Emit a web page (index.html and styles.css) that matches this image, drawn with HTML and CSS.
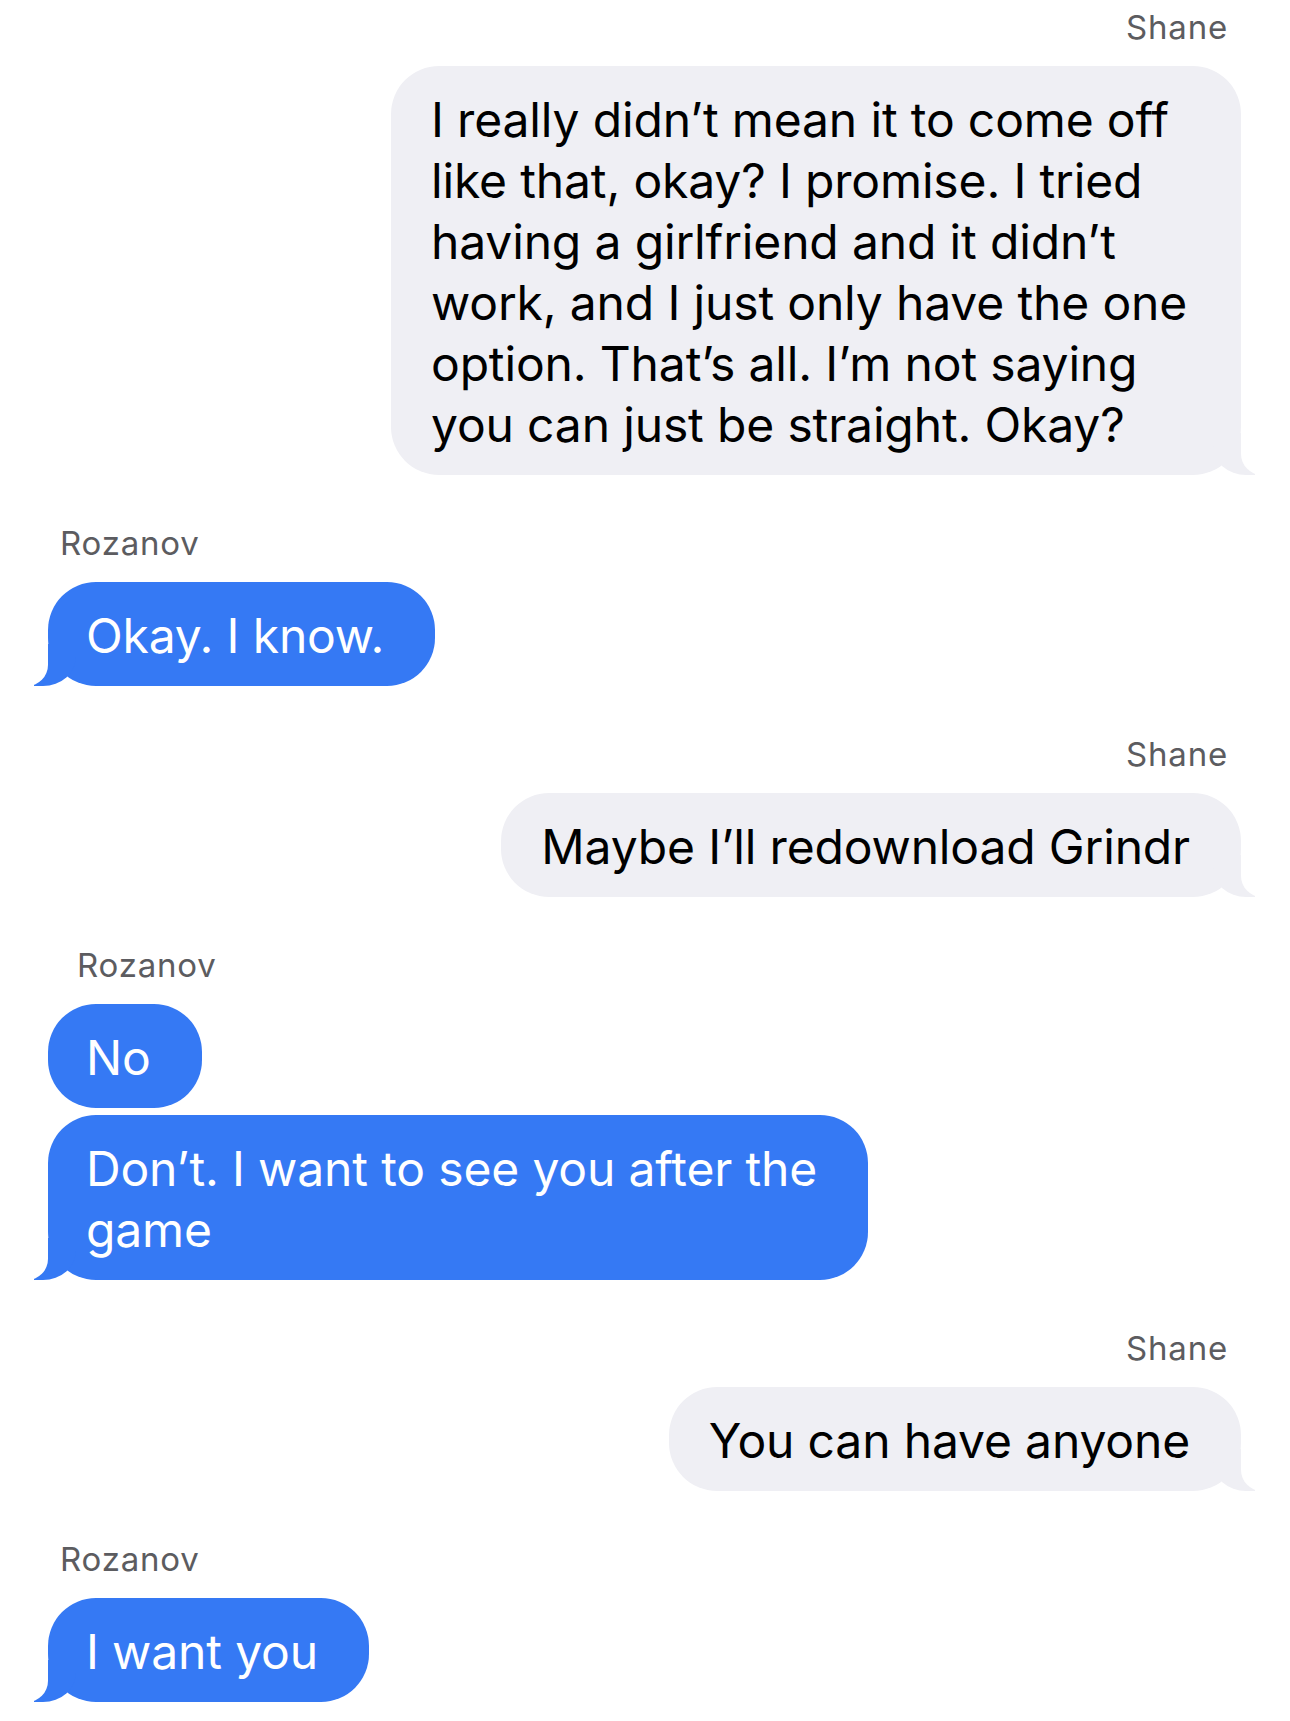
FILE: index.html
```html
<!DOCTYPE html>
<html>
<head>
  <title>Messages</title>
  <meta charset="UTF-8">
  <meta name="viewport" content="width=device-width, initial-scale=1.0">
  <link rel="stylesheet" href="styles.css">
</head>
<body>
  <div class="thread">

    <div class="group sent">
      <div class="sender">Shane</div>
      <div class="bubble tail">I really didn’t mean it to come off like that, okay? I promise. I tried having a girlfriend and it didn’t work, and I just only have the one option. That’s all. I’m not saying you can just be straight. Okay?</div>
    </div>

    <div class="group received">
      <div class="sender">Rozanov</div>
      <div class="bubble tail">Okay. I know.</div>
    </div>

    <div class="group sent">
      <div class="sender">Shane</div>
      <div class="bubble tail">Maybe I’ll redownload Grindr</div>
    </div>

    <div class="group received">
      <div class="sender indent">Rozanov</div>
      <div class="bubble">No</div>
      <div class="bubble tail">Don’t. I want to see you after the<br>game</div>
    </div>

    <div class="group sent">
      <div class="sender">Shane</div>
      <div class="bubble tail">You can have anyone</div>
    </div>

    <div class="group received">
      <div class="sender">Rozanov</div>
      <div class="bubble tail">I want you</div>
    </div>

  </div>
</body>
</html>
```

FILE: styles.css
```css
/* Reset styles */
* {
  margin: 0;
  padding: 0;
  box-sizing: border-box;
}

/* Base styles */
body {
  font-family: 'Inter', 'Liberation Sans', sans-serif;
  background-color: #fff;
  color: #000;
}

/* Layout styles */
.thread {
  display: flex;
  flex-direction: column;
  gap: 48px;
  padding: 7px 49px 19px 48px;
}

.group {
  display: flex;
  flex-direction: column;
  gap: 7px;
}

.group.sent {
  align-items: flex-end;
}

.group.received {
  align-items: flex-start;
}

.sender {
  font-size: 33px;
  line-height: 40px;
  letter-spacing: 0.8px;
  color: #5c5c60;
  margin-bottom: 12px;
  padding: 0 13px 0 12px;
}

.sender.indent {
  padding-left: 29px;
}

/* Bubbles */
.bubble {
  position: relative;
  max-width: 850px;
  padding: 23px 51px 20px 40px;
  border-radius: 48px;
  font-size: 48px;
  line-height: 61px;
  letter-spacing: -0.15px;
}

.sent .bubble {
  background-color: #efeff4;
  color: #000;
}

.received .bubble {
  padding-left: 38px;
  background-color: #3579f4;
  color: #fff;
}

/* tail: a coloured corner, trimmed by a white cut-out */
.bubble.tail::before,
.bubble.tail::after {
  content: "";
  position: absolute;
  bottom: 0;
  height: 42px;
}

.sent .bubble.tail::before {
  right: -14px;
  width: 0;
  border-right: 42px solid #efeff4;
  border-bottom-left-radius: 33px 29px;
}

.sent .bubble.tail::after {
  right: -26px;
  width: 26px;
  background-color: #fff;
  border-bottom-left-radius: 21px;
}

.received .bubble.tail::before {
  left: -14px;
  width: 0;
  border-left: 42px solid #3579f4;
  border-bottom-right-radius: 33px 29px;
}

.received .bubble.tail::after {
  left: -26px;
  width: 26px;
  background-color: #fff;
  border-bottom-right-radius: 21px;
}
```
